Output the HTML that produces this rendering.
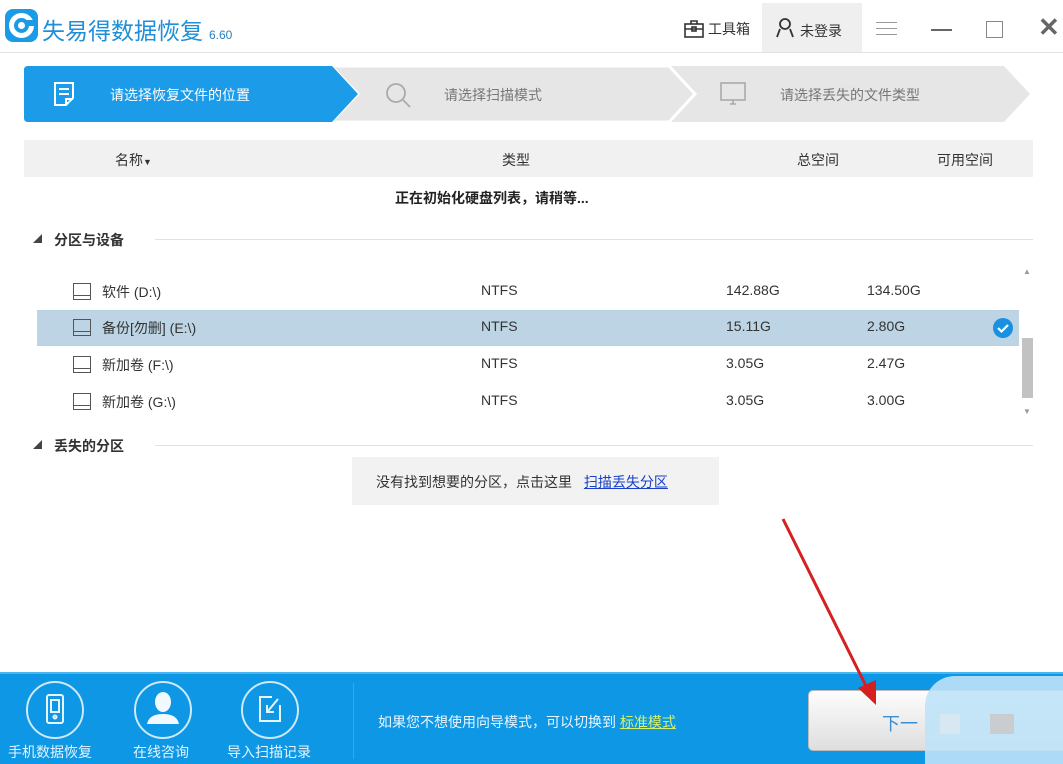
<!DOCTYPE html>
<html><head><meta charset="utf-8"><style>
*{margin:0;padding:0;box-sizing:border-box}
body{width:1063px;height:764px;position:relative;background:#fff;font-family:"Liberation Sans","Noto Sans CJK SC",sans-serif;overflow:hidden;color:#333}
.a{position:absolute;white-space:nowrap}
.t{font-size:14px}
</style></head><body>
<!-- title bar -->
<div class="a" style="left:0;top:52px;width:1063px;height:1px;background:#e3e3e3"></div>
<svg class="a" style="left:5px;top:9px" width="33" height="33" viewBox="0 0 33 33"><rect width="33" height="33" rx="8" fill="#1b9be6"/><circle cx="16.5" cy="16.5" r="10" fill="none" stroke="#fff" stroke-width="5"/><circle cx="16.5" cy="16.5" r="3.5" fill="#fff"/><rect x="20" y="11" width="9" height="6" fill="#1b9be6"/></svg>
<div class="a" style="left:42px;top:12px;font-size:23px;color:#1e8fd8">失易得数据恢复<span style="font-size:12px;color:#2a7fc0;margin-left:6px">6.60</span></div>
<svg class="a" style="left:684px;top:20px" width="20" height="18" viewBox="0 0 20 18" fill="none" stroke="#333" stroke-width="1.6"><rect x="1" y="4" width="18" height="13"/><path d="M7 4V1h6v3M1 9h18"/><rect x="8" y="7" width="4" height="4"/></svg>
<div class="a t" style="left:708px;top:19px">工具箱</div>
<div class="a" style="left:762px;top:3px;width:100px;height:49px;background:#efefef"></div>
<svg class="a" style="left:776px;top:18px" width="18" height="20" viewBox="0 0 18 20" fill="none" stroke="#333" stroke-width="1.8"><circle cx="9" cy="6" r="5"/><path d="M1 19l3-8M17 19l-3-8"/></svg>
<div class="a t" style="left:800px;top:21px">未登录</div>
<div class="a" style="left:876px;top:22px;width:21px;height:13px;border-top:1px solid #999;border-bottom:1px solid #999"></div>
<div class="a" style="left:876px;top:28px;width:21px;height:1px;background:#999"></div>
<div class="a" style="left:931px;top:29px;width:21px;height:2px;background:#666"></div>
<div class="a" style="left:986px;top:21px;width:17px;height:17px;border:1px solid #888"></div>
<div class="a" style="left:1038px;top:12px;font-size:26px;font-weight:bold;color:#666">✕</div>
<!-- steps -->
<svg class="a" style="left:24px;top:66px" width="1010" height="56" viewBox="0 0 1010 56">
<polygon points="641,0 980,0 1006,28 980,56 641,56 668,28" fill="#e6e6e6"/>
<polygon points="307,0 645,0 671,28 645,56 307,56 334,28" fill="#e6e6e6" stroke="#fff" stroke-width="3"/>
<path d="M4 0H308L334 28L308 56H4Q0 56 0 52V4Q0 0 4 0Z" fill="#1b9be8"/>
</svg>
<svg class="a" style="left:53px;top:81px" width="22" height="26" viewBox="0 0 22 26" fill="none" stroke="#fff" stroke-width="2"><path d="M2 2h18v15l-7 7H2z"/><path d="M6 8h10M6 13h10M13 24v-6h7"/></svg>
<div class="a t" style="left:110px;top:85px;color:#fff">请选择恢复文件的位置</div>
<svg class="a" style="left:384px;top:81px" width="28" height="28" viewBox="0 0 28 28" fill="none" stroke="#aaa" stroke-width="1.8"><circle cx="12" cy="12" r="9"/><path d="M19 19l7 7"/></svg>
<div class="a t" style="left:444px;top:85px;color:#777">请选择扫描模式</div>
<svg class="a" style="left:720px;top:82px" width="26" height="24" viewBox="0 0 26 24" fill="none" stroke="#aaa" stroke-width="1.6"><rect x="1" y="1" width="24" height="17"/><path d="M10 22h6M13 18v4"/></svg>
<div class="a t" style="left:780px;top:85px;color:#777">请选择丢失的文件类型</div>
<!-- header -->
<div class="a" style="left:24px;top:140px;width:1009px;height:37px;background:#f1f1f1"></div>
<div class="a t" style="left:115px;top:150px">名称<span style="font-size:9px">▼</span></div>
<div class="a t" style="left:502px;top:150px">类型</div>
<div class="a t" style="left:797px;top:150px">总空间</div>
<div class="a t" style="left:937px;top:150px">可用空间</div>
<div class="a t" style="left:395px;top:188px;font-weight:bold;color:#222">正在初始化硬盘列表，请稍等...</div>
<!-- section 1 -->
<div class="a" style="left:33px;top:232px;font-size:9px;color:#444">◢</div>
<div class="a t" style="left:54px;top:230px;font-weight:bold">分区与设备</div>
<div class="a" style="left:155px;top:239px;width:878px;height:1px;background:#dde3e8"></div>
<div class="a" style="left:37px;top:310px;width:982px;height:36px;background:#bcd4e4"></div>
<div class="a t" style="left:0;top:282px;width:0"></div>
<!-- rows -->
<div class="a" style="left:73px;top:283px;width:18px;height:17px;border:1.5px solid #555"></div><div class="a" style="left:73px;top:295px;width:18px;height:1px;background:#555"></div>
<div class="a t" style="left:102px;top:282px">软件 (D:\)</div>
<div class="a" style="left:73px;top:319px;width:18px;height:17px;border:1.5px solid #555"></div><div class="a" style="left:73px;top:331px;width:18px;height:1px;background:#555"></div>
<div class="a t" style="left:102px;top:318px">备份[勿删] (E:\)</div>
<div class="a" style="left:73px;top:356px;width:18px;height:17px;border:1.5px solid #555"></div><div class="a" style="left:73px;top:368px;width:18px;height:1px;background:#555"></div>
<div class="a t" style="left:102px;top:355px">新加卷 (F:\)</div>
<div class="a" style="left:73px;top:393px;width:18px;height:17px;border:1.5px solid #555"></div><div class="a" style="left:73px;top:405px;width:18px;height:1px;background:#555"></div>
<div class="a t" style="left:102px;top:392px">新加卷 (G:\)</div>
<div class="a t" style="left:481px;top:282px">NTFS</div>
<div class="a t" style="left:481px;top:318px">NTFS</div>
<div class="a t" style="left:481px;top:355px">NTFS</div>
<div class="a t" style="left:481px;top:392px">NTFS</div>
<div class="a t" style="left:726px;top:282px">142.88G</div>
<div class="a t" style="left:726px;top:318px">15.11G</div>
<div class="a t" style="left:726px;top:355px">3.05G</div>
<div class="a t" style="left:726px;top:392px">3.05G</div>
<div class="a t" style="left:867px;top:282px">134.50G</div>
<div class="a t" style="left:867px;top:318px">2.80G</div>
<div class="a t" style="left:867px;top:355px">2.47G</div>
<div class="a t" style="left:867px;top:392px">3.00G</div>
<svg class="a" style="left:993px;top:318px" width="20" height="20" viewBox="0 0 20 20"><circle cx="10" cy="10" r="10" fill="#1b8fe0"/><path d="M5 10l3.5 3.5L15 7" stroke="#fff" stroke-width="2.2" fill="none"/></svg>
<!-- scrollbar -->
<div class="a" style="left:1023px;top:267px;font-size:8px;color:#999">▲</div>
<div class="a" style="left:1022px;top:338px;width:11px;height:60px;background:#c2c2c2"></div>
<div class="a" style="left:1023px;top:407px;font-size:8px;color:#999">▼</div>
<!-- section 2 -->
<div class="a" style="left:33px;top:438px;font-size:9px;color:#444">◢</div>
<div class="a t" style="left:54px;top:436px;font-weight:bold">丢失的分区</div>
<div class="a" style="left:155px;top:445px;width:878px;height:1px;background:#dde3e8"></div>
<div class="a" style="left:352px;top:457px;width:367px;height:48px;background:#f2f2f2"></div>
<div class="a t" style="left:376px;top:472px;color:#333">没有找到想要的分区，点击这里 <span style="color:#1a3fc8;text-decoration:underline;margin-left:8px">扫描丢失分区</span></div>
<!-- bottom bar -->
<div class="a" style="left:0;top:672px;width:1063px;height:92px;background:#0d97e4;border-top:2px solid #4ab6f0"></div>
<div class="a" style="left:26px;top:681px;width:58px;height:58px;border:2px solid #cde9fa;border-radius:50%"></div>
<svg class="a" style="left:45px;top:693px" width="20" height="32" viewBox="0 0 20 32" fill="none" stroke="#e8f5fd" stroke-width="2"><rect x="2" y="2" width="16" height="28" rx="2"/><rect x="6" y="7" width="8" height="12"/><circle cx="10" cy="24" r="1.5"/></svg>
<div class="a" style="left:134px;top:681px;width:58px;height:58px;border:2px solid #cde9fa;border-radius:50%"></div>
<svg class="a" style="left:142px;top:688px" width="42" height="42" viewBox="0 0 42 42"><ellipse cx="21" cy="14" rx="8" ry="10" fill="#f2f9fe"/><path d="M5 36Q7 26 21 26Q35 26 37 36Z" fill="#f2f9fe"/></svg>
<div class="a" style="left:241px;top:681px;width:58px;height:58px;border:2px solid #cde9fa;border-radius:50%"></div>
<svg class="a" style="left:258px;top:695px" width="26" height="28" viewBox="0 0 26 28" fill="none" stroke="#e8f5fd" stroke-width="2"><path d="M14 2H2v24h20V10"/><path d="M20 4L10 16M9 10v7h7"/></svg>
<div class="a" style="left:8px;top:742px;font-size:14px;color:#e6f4fd">手机数据恢复</div>
<div class="a" style="left:133px;top:742px;font-size:14px;color:#e6f4fd">在线咨询</div>
<div class="a" style="left:227px;top:742px;font-size:14px;color:#e6f4fd">导入扫描记录</div>
<div class="a" style="left:353px;top:683px;width:1px;height:76px;background:#3aa6e6"></div>
<div class="a" style="left:378px;top:712px;font-size:14px;color:#eaf6fe">如果您不想使用向导模式，可以切换到 <span style="color:#d6f06a;text-decoration:underline">标准模式</span></div>
<div class="a" style="left:808px;top:690px;width:260px;height:61px;background:linear-gradient(#fdfdfd,#dedede);border-radius:5px;border:1px solid #bbb"></div>
<div class="a" style="left:882px;top:710px;font-size:18px;color:#3a8ed0">下一</div>
<div class="a" style="left:925px;top:676px;width:138px;height:88px;background:#bfe2f8;border-radius:30px 0 0 0;opacity:.9"></div>
<div class="a" style="left:990px;top:714px;width:24px;height:20px;background:#c9cdd0"></div>
<div class="a" style="left:940px;top:714px;width:20px;height:20px;background:#d8e8f2"></div>
<!-- red arrow -->
<svg class="a" style="left:0;top:0" width="1063" height="764"><line x1="783" y1="519" x2="868" y2="690" stroke="#d42020" stroke-width="3"/><polygon points="876,705 858,688 876,680" fill="#d42020"/></svg>
</body></html>
